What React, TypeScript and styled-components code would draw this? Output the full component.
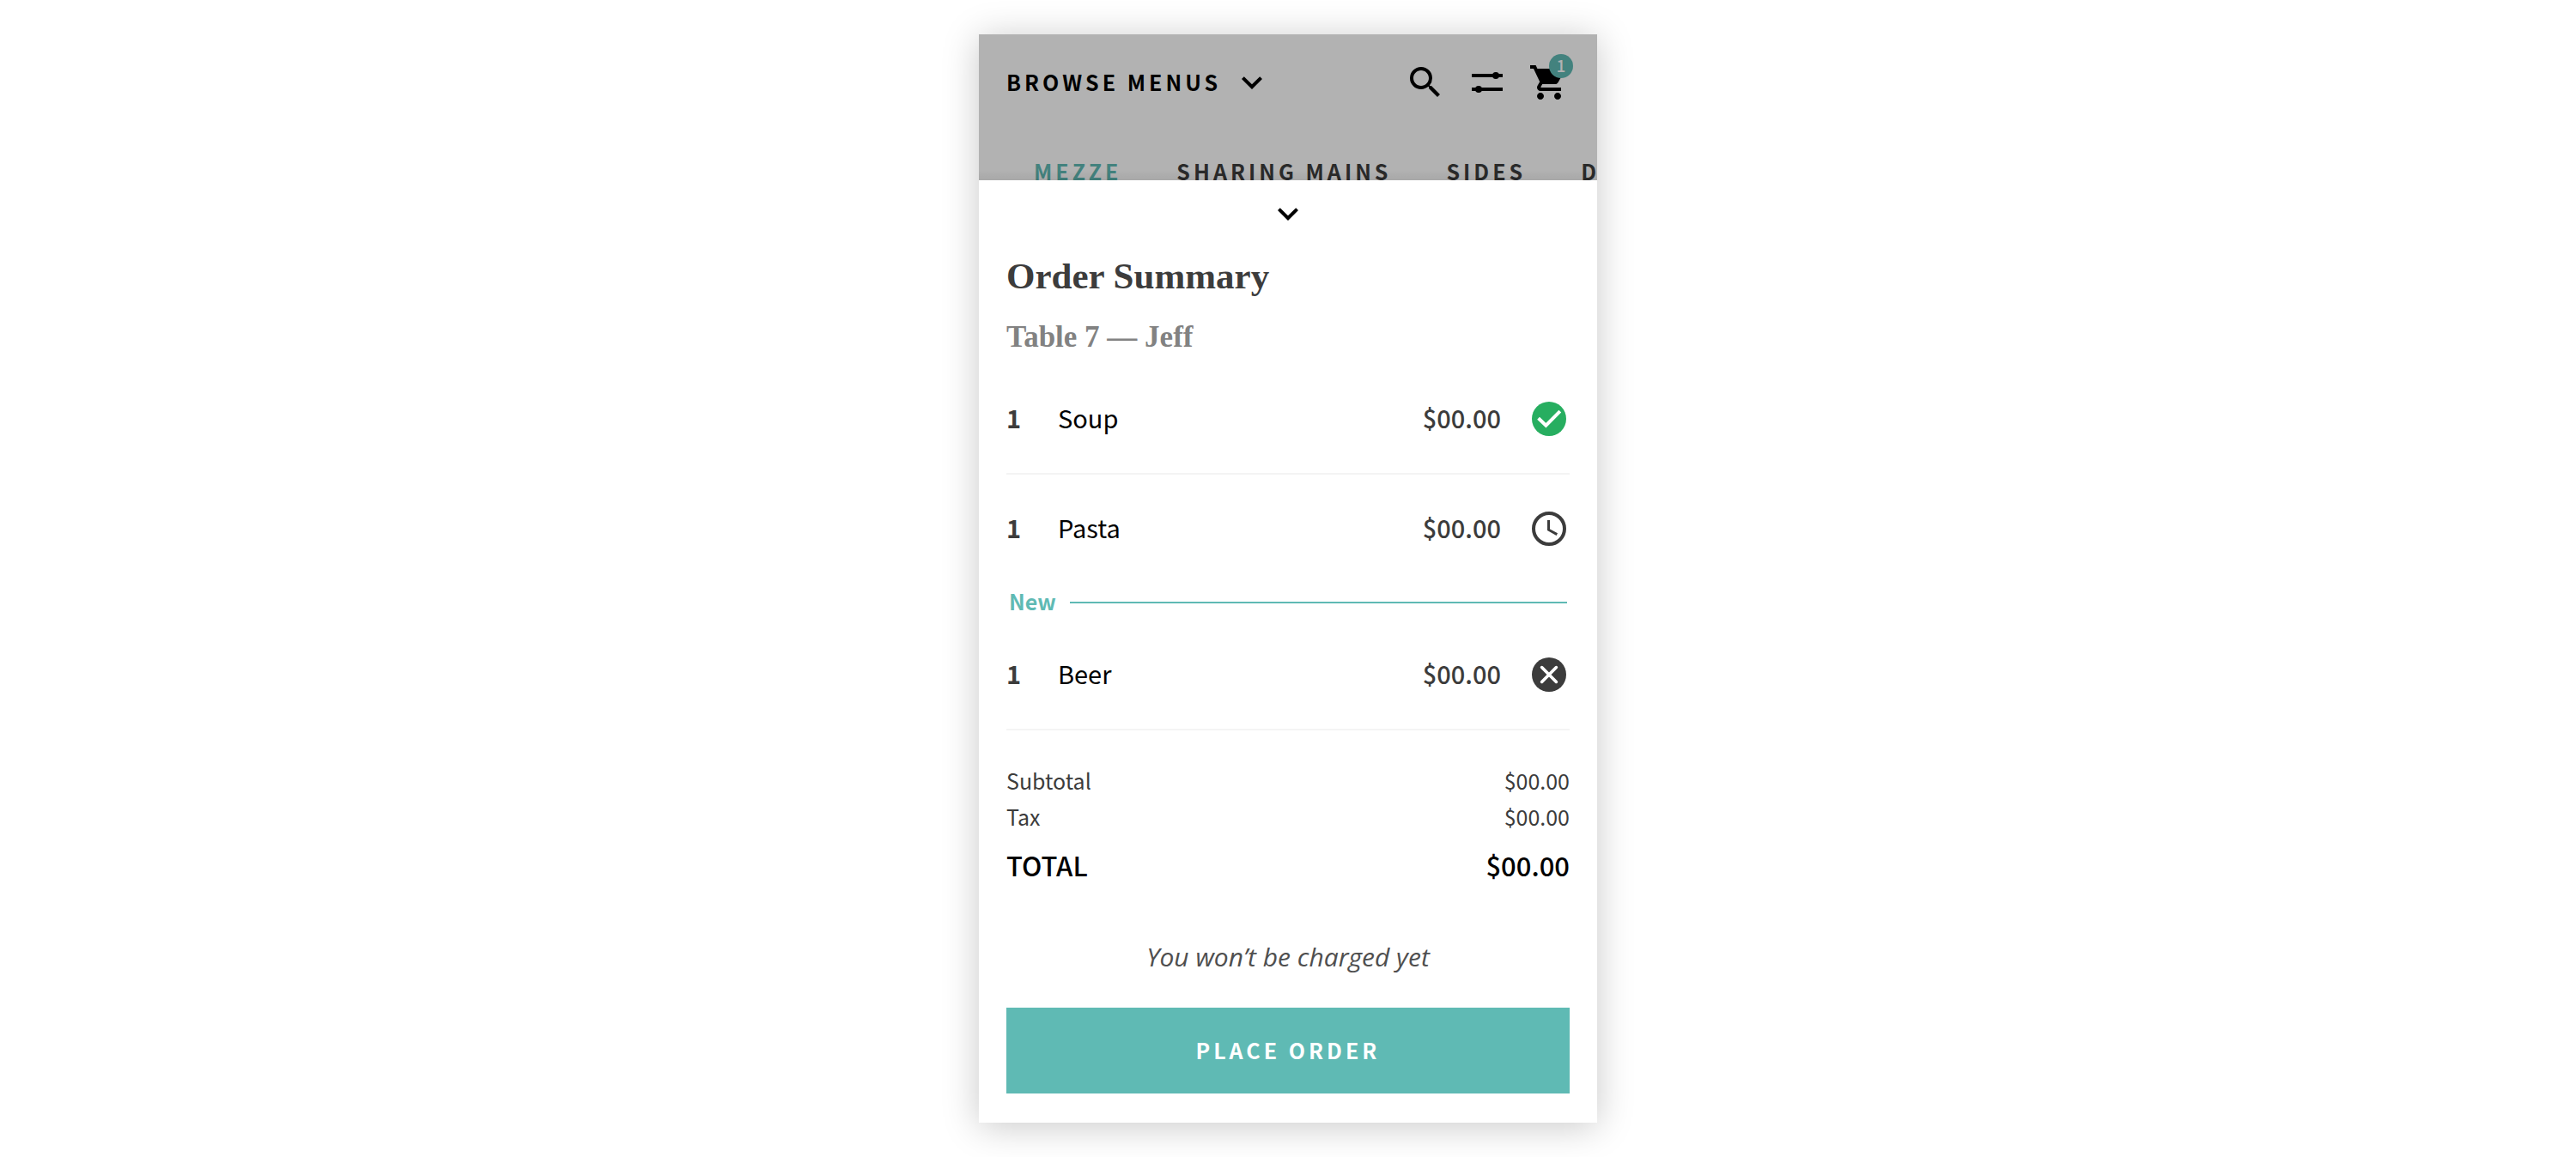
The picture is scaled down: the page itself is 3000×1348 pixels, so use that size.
import React from "react";
import styled, { createGlobalStyle } from "styled-components";

const sans = `"Noto Sans CJK JP", "Noto Sans CJK SC", "Noto Sans", sans-serif`;
const serif = `"Liberation Serif", "Times New Roman", serif`;

const color = {
  ink: "#000000",
  text: "#3c3c3c",
  muted: "#828282",
  teal: "#5fbab4",
  green: "#27ae60",
  rule: "#f4f4f4",
  dimmed: "#b2b2b2",
  dimmedTeal: "#43827e",
  dimmedText: "#2a2a2a",
};

const GlobalStyle = createGlobalStyle`
  *, *::before, *::after { box-sizing: border-box; }
  body { margin: 0; background: #fff; font-family: ${sans}; color: ${color.ink}; }
  h1, h2, p, ul, dl, dd { margin: 0; padding: 0; }
  button { border: 0; padding: 0; background: none; color: inherit; font: inherit; cursor: pointer; }
`;

const Page = styled.main`
  display: flex;
  justify-content: center;
  padding: 40px 0;
`;

const Phone = styled.div`
  width: 100%;
  max-width: 720px;
  background: #fff;
  box-shadow: 0 4px 40px rgba(0, 0, 0, 0.22);
`;

const Header = styled.header`
  padding-top: 32px;
  background: ${color.dimmed};
`;

const TopBar = styled.div`
  display: flex;
  align-items: center;
  justify-content: space-between;
  padding: 0 32px;
`;

const MenuPicker = styled.button`
  display: flex;
  align-items: center;
  gap: 12px;
`;

const Caps = styled.span`
  padding-bottom: 2px;
  font-size: 25px;
  line-height: 40px;
  font-weight: 700;
  letter-spacing: 4px;
`;

const Actions = styled.div`
  display: flex;
  gap: 24px;
`;

const IconButton = styled.button`
  position: relative;
  display: block;
  height: 48px;
`;

const Glyph = styled.svg`
  display: block;
  width: 48px;
  height: 48px;
  fill: currentColor;
`;

const Badge = styled.span`
  position: absolute;
  top: -9px;
  right: -4px;
  width: 28px;
  height: 28px;
  border-radius: 50%;
  background: ${color.dimmedTeal};
  color: ${color.dimmed};
  font-size: 19px;
  line-height: 26px;
  font-weight: 500;
  text-align: center;
`;

const Tabs = styled.nav`
  display: flex;
  gap: 64px;
  margin-top: 59px;
  padding-left: 64px;
  overflow: hidden;
  white-space: nowrap;
`;

const Tab = styled.a<{ $active?: boolean }>`
  color: ${(p) => (p.$active ? color.dimmedTeal : color.dimmedText)};
  text-decoration: none;
  flex: none;
  display: flex;
`;

const Sheet = styled.section`
  position: relative;
  display: flex;
  flex-direction: column;
  margin-top: -11px;
  padding: 15px 32px 34px;
  background: #fff;
`;

const SheetShade = styled.div`
  position: relative;
  height: 12px;
  margin-top: -23px;
  margin-bottom: 11px;
  background: linear-gradient(rgba(0, 0, 0, 0), rgba(0, 0, 0, 0.06));
`;

const Collapse = styled(IconButton)`
  align-self: center;
`;

const Title = styled.h1`
  margin-top: 21px;
  font: 700 43px/56px ${serif};
  color: ${color.text};
`;

const Subtitle = styled.h2`
  margin-top: 19px;
  font: 700 35px/48px ${serif};
  color: ${color.muted};
`;

const Items = styled.ul`
  margin-top: 8px;
  list-style: none;
`;

const Item = styled.li<{ $ruled?: boolean }>`
  display: grid;
  grid-template-columns: 60px 1fr auto 48px;
  align-items: center;
  height: 128px;
  border-bottom: 2px solid ${(p) => (p.$ruled ? color.rule : "transparent")};
  font-size: 29px;
  line-height: 40px;
`;

const Cell = styled.span`
  padding-bottom: 4px;
`;

const Quantity = styled(Cell)`
  font-weight: 700;
  color: ${color.text};
`;

const Price = styled(Cell)`
  padding-right: 32px;
  font-weight: 500;
  color: ${color.text};
`;

const NewMark = styled.li`
  display: flex;
  align-items: center;
  gap: 16px;
  height: 42px;
  padding: 0 3px;
  font-size: 25px;
  line-height: 40px;
  font-weight: 700;
  color: ${color.teal};

  &::after {
    content: "";
    flex: 1;
    height: 2px;
    background: ${color.teal};
  }
`;

const NewLabel = styled.span`
  padding-bottom: 4px;
`;

const Totals = styled.dl`
  margin-top: 37px;
`;

const TotalLine = styled.div<{ $grand?: boolean }>`
  display: flex;
  justify-content: space-between;
  margin-top: ${(p) => (p.$grand ? "12px" : "0")};
  font-size: ${(p) => (p.$grand ? "31px" : "25px")};
  line-height: ${(p) => (p.$grand ? "48px" : "42px")};
  font-weight: ${(p) => (p.$grand ? 500 : 400)};
  color: ${(p) => (p.$grand ? color.ink : color.text)};
`;

const Note = styled.p`
  margin-top: 59px;
  font: italic 400 30px/48px "Open Sans", "Noto Sans", sans-serif;
  color: #4f4f4f;
  text-align: center;
`;

const PlaceOrder = styled.button`
  display: flex;
  align-items: center;
  justify-content: center;
  height: 100px;
  margin-top: 35px;
  background: ${color.teal};
  color: #fff;
`;

const Chevron = () => (
  <Glyph viewBox="0 0 24 24" aria-hidden="true">
    <path d="M7.41 8.59L12 13.17l4.59-4.58L18 10l-6 6-6-6z" />
  </Glyph>
);

type Status = "served" | "pending" | "draft";

const StatusIcon = ({ status, name }: { status: Status; name: string }) => {
  if (status === "served")
    return (
      <Glyph viewBox="0 0 24 24" role="img" aria-label="Served" color={color.green}>
        <circle cx="12" cy="12" r="10" />
        <path d="M5.8 11.6l4.4 4.2 8.2-8.2" fill="none" stroke="#fff" strokeWidth="2" />
      </Glyph>
    );
  if (status === "pending")
    return (
      <Glyph viewBox="0 0 24 24" role="img" aria-label="Pending" color={color.text}>
        <circle cx="12" cy="12" r="9" fill="none" stroke="currentColor" strokeWidth="2" />
        <path d="M11.75 7v5.6l4.9 2.7" fill="none" stroke="currentColor" strokeWidth="1.5" />
      </Glyph>
    );
  return (
    <IconButton aria-label={`Remove ${name}`}>
      <Glyph viewBox="0 0 24 24" color={color.text} aria-hidden="true">
        <circle cx="12" cy="12" r="10" />
        <path d="M7.8 7.8l8.4 8.4M16.2 7.8l-8.4 8.4" stroke="#fff" strokeWidth="1.8" strokeLinecap="round" />
      </Glyph>
    </IconButton>
  );
};

interface LineProps {
  name: string;
  status: Status;
  ruled?: boolean;
}

const OrderLine = ({ name, status, ruled }: LineProps) => (
  <Item $ruled={ruled}>
    <Quantity>1</Quantity>
    <Cell>{name}</Cell>
    <Price>$00.00</Price>
    <StatusIcon status={status} name={name} />
  </Item>
);

const tabs = ["MEZZE", "SHARING MAINS", "SIDES", "D"];

export default function App() {
  return (
    <>
      <GlobalStyle />
      <Page>
        <Phone>
          <Header>
            <TopBar>
              <MenuPicker>
                <Caps>BROWSE MENUS</Caps>
                <Chevron />
              </MenuPicker>
              <Actions>
                <IconButton aria-label="Search">
                  <Glyph viewBox="0 0 24 24" aria-hidden="true">
                    <path d="M15.5 14h-.79l-.28-.27A6.471 6.471 0 0 0 16 9.5 6.5 6.5 0 1 0 9.5 16c1.61 0 3.09-.59 4.23-1.57l.27.28v.79l5 4.99L20.49 19l-4.99-5zm-6 0C7.01 14 5 11.99 5 9.5S7.01 5 9.5 5 14 7.01 14 9.5 11.99 14 9.5 14z" />
                  </Glyph>
                </IconButton>
                <IconButton aria-label="Filter">
                  <Glyph viewBox="0 0 24 24" aria-hidden="true">
                    <path d="M3 7h18v2H3zM3 15h18v2H3z" />
                    <circle cx="17" cy="8" r="2" />
                    <circle cx="7" cy="16" r="2" />
                  </Glyph>
                </IconButton>
                <IconButton aria-label="Cart">
                  <Glyph viewBox="0 0 24 24" aria-hidden="true">
                    <path d="M7 18c-1.1 0-1.99.9-1.99 2S5.9 22 7 22s2-.9 2-2-.9-2-2-2zM1 2v2h2l3.6 7.59-1.35 2.45c-.16.28-.25.61-.25.96 0 1.1.9 2 2 2h12v-2H7.42c-.14 0-.25-.11-.25-.25l.03-.12.9-1.63h7.45c.75 0 1.41-.41 1.75-1.03l3.58-6.49A1.003 1.003 0 0 0 20 4H5.21l-.94-2H1zm16 16c-1.1 0-1.99.9-1.99 2s.89 2 1.99 2 2-.9 2-2-.9-2-2-2z" />
                  </Glyph>
                  <Badge>1</Badge>
                </IconButton>
              </Actions>
            </TopBar>
            <Tabs aria-label="Menu sections">
              {tabs.map((tab, i) => (
                <Tab key={tab} href="#" $active={i === 0}>
                  <Caps>{tab}</Caps>
                </Tab>
              ))}
            </Tabs>
          </Header>
          <SheetShade />
          <Sheet>
            <Collapse aria-label="Close order summary">
              <Chevron />
            </Collapse>
            <Title>Order Summary</Title>
            <Subtitle>Table 7 — Jeff</Subtitle>
            <Items>
              <OrderLine name="Soup" status="served" ruled />
              <OrderLine name="Pasta" status="pending" />
              <NewMark>
                <NewLabel>New</NewLabel>
              </NewMark>
              <OrderLine name="Beer" status="draft" ruled />
            </Items>
            <Totals>
              <TotalLine>
                <dt>Subtotal</dt>
                <dd>$00.00</dd>
              </TotalLine>
              <TotalLine>
                <dt>Tax</dt>
                <dd>$00.00</dd>
              </TotalLine>
              <TotalLine $grand>
                <dt>TOTAL</dt>
                <dd>$00.00</dd>
              </TotalLine>
            </Totals>
            <Note>You won’t be charged yet</Note>
            <PlaceOrder>
              <Caps>PLACE ORDER</Caps>
            </PlaceOrder>
          </Sheet>
        </Phone>
      </Page>
    </>
  );
}
